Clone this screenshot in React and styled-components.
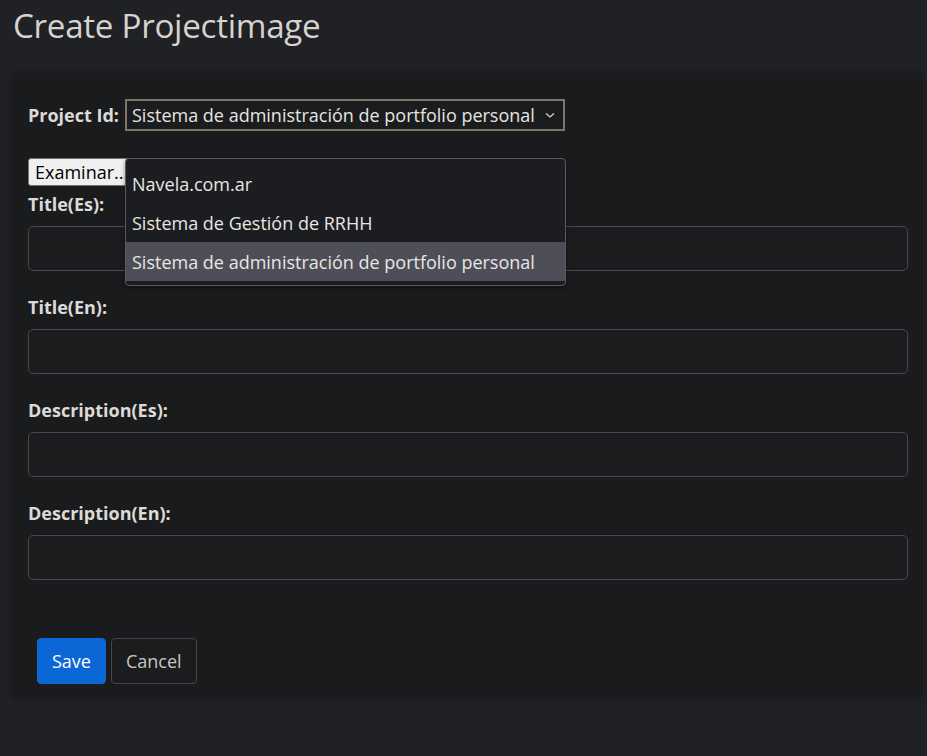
import React from "react";
import styled, { createGlobalStyle } from "styled-components";

const Global = createGlobalStyle`
  html, body { margin: 0; padding: 0; background: #202124; }
  body { font-family: "Open Sans", "Noto Sans", sans-serif; color: #dcdcdc; }
  * { box-sizing: border-box; }
`;

const Page = styled.div`
  min-height: 756px;
  padding: 0 5px 0 12px;
  background: #202124;
`;

const Heading = styled.h1`
  margin: 0;
  padding: 6px 0 0 1px;
  height: 73px;
  font-size: 33.2px;
  font-weight: 400;
  line-height: 1.2;
  color: #d6d3ce;
  letter-spacing: -0.3px;
`;

const Card = styled.form`
  background: #1a1b1d;
  border-radius: 5px;
  padding: 26px 14px 14px 16px;
  box-shadow: 0 0 4px rgba(0, 0, 0, 0.25);
`;

const ProjectRow = styled.div`
  display: flex;
  align-items: center;
  height: 32px;
`;

const InlineLabel = styled.label`
  font-weight: 700;
  font-size: 18px;
  color: #dcdad6;
  margin-right: 6px;
`;

const SelectWrap = styled.div`
  position: relative;
`;

const SelectBox = styled.div`
  width: 440px;
  height: 32px;
  border: 2px solid #7d766b;
  background: #1b1c1e;
  display: flex;
  align-items: center;
  padding: 0 8px 0 5px;
  font-size: 18px;
  color: #e6e4e0;
  justify-content: space-between;
  white-space: nowrap;
`;

const Menu = styled.div`
  position: absolute;
  left: 0;
  top: 59px;
  width: 441px;
  background: #1c1d20;
  border: 1px solid #5a5a60;
  border-radius: 4px;
  padding: 5px 0 4px 0;
  z-index: 5;
  box-shadow: 0 2px 4px rgba(0, 0, 0, 0.4);
`;

const MenuItem = styled.div`
  height: 39px;
  display: flex;
  align-items: center;
  padding: 0 6px;
  font-size: 18px;
  color: #e8e6e2;
  white-space: nowrap;
  background: ${(p) => (p.$active ? "#4e4e58" : "transparent")};
`;

const FileButton = styled.button`
  margin-top: 27px;
  height: 28px;
  padding: 0 6px;
  font-family: "Open Sans", "Noto Sans", sans-serif;
  font-size: 18px;
  color: #000;
  background: #efefef;
  border: 1px solid #767676;
  border-radius: 3px;
  display: block;
  width: 110px;
  text-align: left;
  overflow: hidden;
  white-space: nowrap;
`;

const Group = styled.div`
  margin-top: ${(p) => p.$top}px;
`;

const Label = styled.label`
  display: block;
  font-weight: 700;
  font-size: 18px;
  color: #dcdad6;
  line-height: 24px;
  margin-bottom: 10px;
`;

const Input = styled.input`
  display: block;
  width: 100%;
  height: 45px;
  background: #1b1c1e;
  border: 1px solid #48494d;
  border-radius: 5px;
  color: #ddd;
  font-size: 16px;
  padding: 0 12px;
  outline: none;
`;

const Actions = styled.div`
  margin-top: 58px;
  display: flex;
  gap: 5px;
  padding-left: 9px;
`;

const Button = styled.button`
  height: 46px;
  padding: 0 14px;
  font-family: "Open Sans", "Noto Sans", sans-serif;
  font-size: 18px;
  border-radius: 4px;
  border: 1px solid ${(p) => (p.$primary ? "#0b66d6" : "#45464a")};
  background: ${(p) => (p.$primary ? "#0b66d6" : "#1b1c1e")};
  color: ${(p) => (p.$primary ? "#ffffff" : "#c9c6c0")};
`;

const Chevron = () => (
  <svg width="10" height="7" viewBox="0 0 10 7">
    <path d="M1 1.5 L5 5 L9 1.5" fill="none" stroke="#d8d6d2" strokeWidth="1.3" />
  </svg>
);

export default function App() {
  return (
    <>
      <Global />
      <Page>
        <Heading>Create Projectimage</Heading>
        <Card>
          <ProjectRow>
            <InlineLabel>Project Id:</InlineLabel>
            <SelectWrap>
              <SelectBox>
                <span>Sistema de administración de portfolio personal</span>
                <Chevron />
              </SelectBox>
              <Menu>
                <MenuItem>Navela.com.ar</MenuItem>
                <MenuItem>Sistema de Gestión de RRHH</MenuItem>
                <MenuItem $active>Sistema de administración de portfolio personal</MenuItem>
              </Menu>
            </SelectWrap>
          </ProjectRow>
          <FileButton type="button">Examinar...</FileButton>
          <Group $top={6}>
            <Label>Title(Es):</Label>
            <Input />
          </Group>
          <Group $top={24}>
            <Label>Title(En):</Label>
            <Input />
          </Group>
          <Group $top={24}>
            <Label>Description(Es):</Label>
            <Input />
          </Group>
          <Group $top={24}>
            <Label>Description(En):</Label>
            <Input />
          </Group>
          <Actions>
            <Button type="button" $primary>Save</Button>
            <Button type="button">Cancel</Button>
          </Actions>
        </Card>
      </Page>
    </>
  );
}
